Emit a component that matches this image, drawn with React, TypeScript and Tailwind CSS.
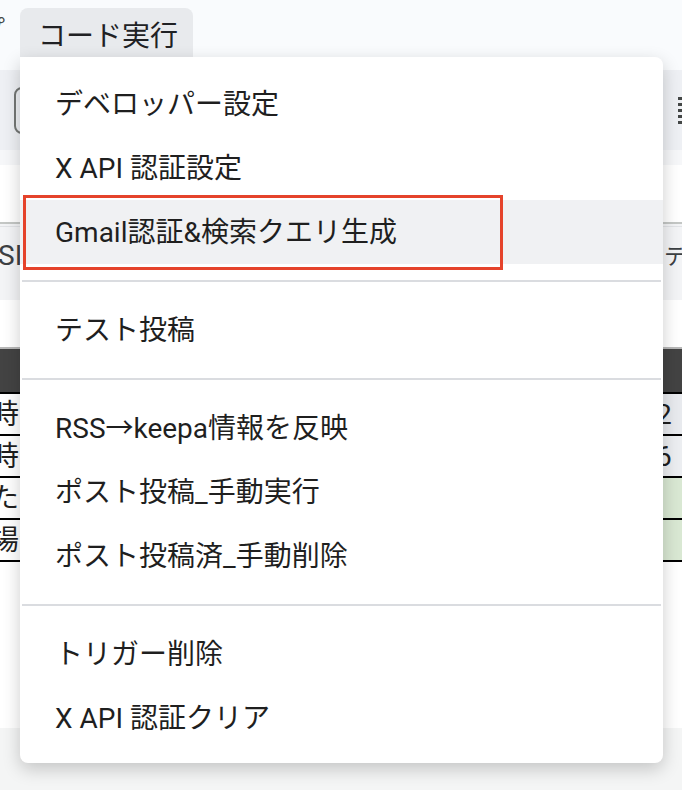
import React from 'react';

const groups: string[][] = [
  ['デベロッパー設定', 'X API 認証設定', 'Gmail認証&検索クエリ生成'],
  ['テスト投稿'],
  ['RSS→keepa情報を反映', 'ポスト投稿_手動実行', 'ポスト投稿済_手動削除'],
  ['トリガー削除', 'X API 認証クリア'],
];

const rows = [
  { left: '時', right: '2', bg: 'bg-[#e8eaee]' },
  { left: '時', right: '6', bg: 'bg-[#eceef1]' },
  { left: 'たい', right: '', bg: 'bg-[#d9e8d3]' },
  { left: '場合', right: '', bg: 'bg-[#d9e8d3]' },
];

function Menu() {
  return (
    <div className="absolute left-[20px] top-[57px] w-[643px] bg-white rounded-b-lg rounded-tr-lg shadow-[0_6px_18px_rgba(0,0,0,0.2)] pt-[15px] pb-[13px]">
      {groups.map((items, gi) => (
        <div key={gi}>
          {gi > 0 && <div className="my-[16px] mx-[2px] h-[2px] bg-[#dadce0]" />}
          {items.map((label) => (
            <div
              key={label}
              className={`h-[64px] flex items-center pl-[35px] pt-[2px] text-[28px] text-[#1f1f1f] ${
                label.startsWith('Gmail') ? 'bg-[#f0f1f3]' : ''
              }`}
            >
              {label}
            </div>
          ))}
        </div>
      ))}
    </div>
  );
}

export default function App() {
  return (
    <div className="relative w-[682px] h-[790px] overflow-hidden bg-white font-['Roboto','Noto_Sans_CJK_JP',sans-serif]">
      {/* menu bar */}
      <div className="h-[70px] bg-[#f9fbfd] flex items-start overflow-hidden">
        <span className="ml-[-23px] mt-[18px] text-[28px] leading-none text-[#444746]">プ</span>
        <div className="ml-[15px] mt-[8px] h-[50px] pl-[18px] pr-[15px] pt-[7px] bg-[#e8eaed] rounded-t-lg flex items-center text-[28px] text-[#202124]">
          コード実行
        </div>
      </div>

      {/* toolbar */}
      <div className="h-[80px] bg-[#eef0f4] flex items-center justify-between">
        <div className="ml-[14px] w-[60px] h-[47px] border-2 border-[#747775] rounded-lg" />
        <div className="flex flex-col gap-[3px]">
          <div className="w-[4px] h-[3px] bg-[#444746]" />
          <div className="w-[4px] h-[3px] bg-[#444746]" />
          <div className="w-[4px] h-[3px] bg-[#444746]" />
          <div className="w-[4px] h-[3px] bg-[#444746]" />
          <div className="w-[4px] h-[3px] bg-[#444746]" />
        </div>
      </div>
      <div className="h-[15px] bg-[#f6f7f9]" />
      <div className="h-[57px] bg-white" />

      {/* formula-ish row */}
      <div className="h-[78px] bg-[#f3f4f6] border-t-2 border-[#c4c7c5]">
        <div className="h-[1px] mt-[2px] bg-[#e1e3e6]" />
        <div className="flex items-center justify-between h-[58px] overflow-hidden">
          <span className="ml-[-2px] text-[28px] text-[#3c4043]">SI</span>
          <span className="mr-[-4px] text-[22px] text-[#3c4043]">テ</span>
        </div>
      </div>
      <div className="h-[47px] bg-white" />

      {/* sheet */}
      <div className="h-[45px] bg-[#434343] border-t-2 border-[#b7b7b7]" />
      {rows.map((r, i) => (
        <div
          key={i}
          className={`h-[42px] flex justify-between border-t-2 border-black overflow-hidden ${
            i === rows.length - 1 ? 'h-[44px] border-b-2' : ''
          }`}
        >
          <span className="ml-[-9px] text-[28px] leading-[42px] text-[#1f1f1f] whitespace-nowrap">{r.left}</span>
          <div className={`w-[42px] h-[40px] ${r.bg} pl-[16px] text-[28px] leading-[42px] text-[#1f1f1f]`}>{r.right}</div>
        </div>
      ))}
      <div className="h-[166px] bg-white" />
      <div className="h-[62px] bg-[#f4f5f5]" />

      <Menu />

      {/* highlight annotation */}
      <div className="absolute left-[23px] top-[195px] w-[480px] h-[75px] border-[3px] border-[#e5432b]" />
    </div>
  );
}
